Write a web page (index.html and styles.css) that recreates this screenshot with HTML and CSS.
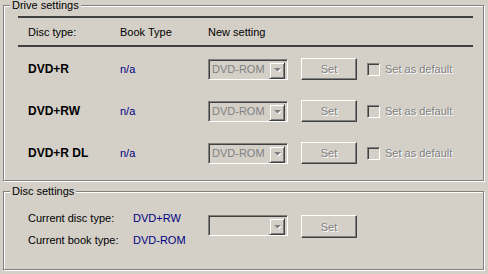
FILE: index.html
```html
<!DOCTYPE html>
<html lang="en">
    <head>
        <meta charset="UTF-8" />
        <title>Drive settings</title>
        <link rel="stylesheet" href="styles.css">
    </head>
    <body>
        <fieldset class="group group-drive">
            <legend>Drive settings</legend>
            <div class="drive-table">
                <div class="row head-row">
                    <span class="first">Disc type:</span>
                    <span>Book Type</span>
                    <span>New setting</span>
                </div>
                <div class="rows">
                    <div class="row">
                        <span class="first disc-name">DVD+R</span>
                        <span class="value">n/a</span>
                        <div class="combo">
                            <span class="combo-text">DVD-ROM</span>
                            <span class="combo-btn"><svg width="7" height="5" viewBox="0 0 7 5"><polygon points="1,1 8,1 4.5,4.5" fill="#fff"/><polygon points="0,0 7,0 3.5,3.5" fill="#808080"/></svg></span>
                        </div>
                        <button class="btn" disabled>Set</button>
                        <label class="check"><span class="check-box"></span><span class="dim">Set as default</span></label>
                    </div>
                    <div class="row">
                        <span class="first disc-name">DVD+RW</span>
                        <span class="value">n/a</span>
                        <div class="combo">
                            <span class="combo-text">DVD-ROM</span>
                            <span class="combo-btn"><svg width="7" height="5" viewBox="0 0 7 5"><polygon points="1,1 8,1 4.5,4.5" fill="#fff"/><polygon points="0,0 7,0 3.5,3.5" fill="#808080"/></svg></span>
                        </div>
                        <button class="btn" disabled>Set</button>
                        <label class="check"><span class="check-box"></span><span class="dim">Set as default</span></label>
                    </div>
                    <div class="row">
                        <span class="first disc-name">DVD+R DL</span>
                        <span class="value">n/a</span>
                        <div class="combo">
                            <span class="combo-text">DVD-ROM</span>
                            <span class="combo-btn"><svg width="7" height="5" viewBox="0 0 7 5"><polygon points="1,1 8,1 4.5,4.5" fill="#fff"/><polygon points="0,0 7,0 3.5,3.5" fill="#808080"/></svg></span>
                        </div>
                        <button class="btn" disabled>Set</button>
                        <label class="check"><span class="check-box"></span><span class="dim">Set as default</span></label>
                    </div>
                </div>
            </div>
        </fieldset>

        <fieldset class="group group-disc">
            <legend>Disc settings</legend>
            <div class="disc-grid">
                <span class="first">Current disc type:</span>
                <span class="value">DVD+RW</span>
                <div class="combo combo-empty">
                    <span class="combo-text"></span>
                    <span class="combo-btn"><svg width="7" height="5" viewBox="0 0 7 5"><polygon points="1,1 8,1 4.5,4.5" fill="#fff"/><polygon points="0,0 7,0 3.5,3.5" fill="#808080"/></svg></span>
                </div>
                <button class="btn btn-tall" disabled>Set</button>
                <span class="first">Current book type:</span>
                <span class="value">DVD-ROM</span>
            </div>
        </fieldset>
    </body>
</html>
```
FILE: styles.css
```css
body {
    margin: 0;
    width: 488px;
    height: 274px;
    background: #d4d0c8;
    font-family: "Liberation Sans", Arial, sans-serif;
    font-size: 11px;
    color: #000;
    overflow: hidden;
}

/* etched group boxes */
.group {
    box-sizing: border-box;
    margin: 0 4px 0 3px;
    padding: 0 6px;
    border: 1px solid #808080;
    box-shadow: inset 1px 1px #fff, 1px 1px #fff;
    min-width: 0;
}
.group legend {
    position: relative;
    padding: 0 2px;
    line-height: 11px;
    background: #d4d0c8;
}
.group-drive {
    height: 181px;
}
.group-disc {
    margin-top: 5px;
    height: 84px;
}

/* drive table */
.drive-table {
    margin: 5px 4px 0 8px;
}
.row {
    display: grid;
    grid-template-columns: 102px 88px 93px 66px 1fr;
    align-items: center;
    height: 21px;
}
.head-row {
    height: 27px;
    border-top: 2px solid #404040;
    border-bottom: 2px solid #404040;
}
.first {
    padding-left: 10px;
}
.rows {
    display: flex;
    flex-direction: column;
    gap: 21px;
    padding-top: 11px;
}
.disc-name {
    font-weight: bold;
    font-size: 12px;
}
.value {
    color: #000080;
}

/* combo box */
.combo {
    display: flex;
    width: 80px;
    height: 21px;
    box-sizing: border-box;
    border: 1px solid;
    border-color: #808080 #fff #fff #808080;
    box-shadow: inset 1px 1px #404040, inset -1px -1px #d4d0c8;
    padding: 2px;
}
.combo-text {
    flex: 1;
    color: #808080;
    line-height: 15px;
    padding-left: 1px;
}
.combo-btn {
    width: 16px;
    height: 17px;
    box-sizing: border-box;
    display: flex;
    align-items: center;
    justify-content: center;
    border: 1px solid;
    border-color: #d4d0c8 #404040 #404040 #d4d0c8;
    box-shadow: inset 1px 1px #fff, inset -1px -1px #808080;
    padding-top: 1px;
}

/* push button */
.btn {
    width: 56px;
    height: 22px;
    padding: 0;
    font: inherit;
    color: #808080;
    text-shadow: 1px 1px #fff;
    background: #d4d0c8;
    border: 1px solid;
    border-color: #fff #404040 #404040 #fff;
    box-shadow: inset -1px -1px #808080;
}
.btn-tall {
    height: 23px;
}

/* check box */
.check {
    display: flex;
    align-items: center;
    gap: 5px;
}
.check-box {
    width: 13px;
    height: 13px;
    box-sizing: border-box;
    border: 1px solid;
    border-color: #808080 #fff #fff #808080;
    box-shadow: inset 1px 1px #404040, inset -1px -1px #d4d0c8;
}
.dim {
    color: #808080;
    text-shadow: 1px 1px #fff;
}

/* disc settings */
.disc-grid {
    display: grid;
    grid-template-columns: 115px 75px 93px 56px;
    grid-template-rows: 22px 22px;
    align-items: center;
    margin: 10px 0 0 8px;
}
.disc-grid .combo {
    grid-column: 3;
    grid-row: 1 / 3;
    align-self: start;
    margin-top: 8px;
}
.disc-grid .btn {
    grid-column: 4;
    grid-row: 1 / 3;
    align-self: start;
    margin-top: 8px;
}
.disc-grid .first:nth-of-type(3) {
    grid-row: 2;
}
```
